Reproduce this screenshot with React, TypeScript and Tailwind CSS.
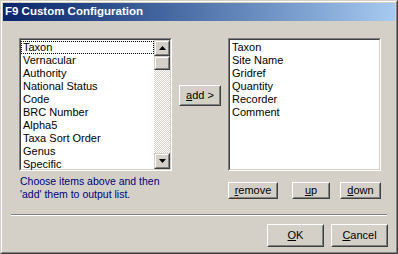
import React from "react";

const font = { fontFamily: '"Liberation Sans", Arial, sans-serif' };

function Btn({ w, h, children, className = "" }: { w: string; h: string; children: React.ReactNode; className?: string }) {
  return (
    <div className={`${w} ${h} ${className} border border-t-white border-l-white border-r-[#404040] border-b-[#404040] bg-[#d4d0c8]`}>
      <div className="w-full h-full border border-t-[#d4d0c8] border-l-[#d4d0c8] border-r-[#808080] border-b-[#808080] flex items-center justify-center text-[11px] text-black leading-none">
        {children}
      </div>
    </div>
  );
}

function ArrowBtn({ up }: { up?: boolean }) {
  return (
    <div className="w-[16px] h-[16px] shrink-0 border border-t-[#d4d0c8] border-l-[#d4d0c8] border-r-[#404040] border-b-[#404040] bg-[#d4d0c8]">
      <div className="w-full h-full border border-t-white border-l-white border-r-[#808080] border-b-[#808080] flex items-center justify-center">
        <svg width="7" height="4" viewBox="0 0 7 4">
          {up ? <polygon points="3.5,0 7,4 0,4" fill="#000" /> : <polygon points="0,0 7,0 3.5,4" fill="#000" />}
        </svg>
      </div>
    </div>
  );
}

function Sunken({ className, children }: { className: string; children: React.ReactNode }) {
  return (
    <div className={`${className} border border-t-[#808080] border-l-[#808080] border-r-white border-b-white`}>
      <div className="w-full h-full border border-t-[#404040] border-l-[#404040] border-r-[#d4d0c8] border-b-[#d4d0c8] bg-white flex">
        {children}
      </div>
    </div>
  );
}

const leftItems = ["Taxon", "Vernacular", "Authority", "National Status", "Code", "BRC Number", "Alpha5", "Taxa Sort Order", "Genus", "Specific"];
const rightItems = ["Taxon", "Site Name", "Gridref", "Quantity", "Recorder", "Comment"];

export default function App() {
  return (
    <div className="w-[398px] h-[254px] bg-[#d4d0c8] border border-t-[#d4d0c8] border-l-[#d4d0c8] border-r-[#404040] border-b-[#404040]" style={font}>
      <div className="w-full h-full border border-t-white border-l-white border-r-[#808080] border-b-[#808080] p-[1px] flex flex-col">
        <div className="h-[18px] shrink-0 bg-gradient-to-r from-[#0a246a] to-[#a6caf0] flex items-center pl-[2px]">
          <span className="text-white font-bold text-[11.5px] leading-none">F9 Custom Configuration</span>
        </div>
        <div className="pl-[16px] pt-[17px] flex">
          <div className="w-[153px] flex flex-col">
            <Sunken className="w-[153px] h-[133px]">
              <div className="flex-1 pt-[1px] text-[11px] leading-[13px] text-black">
                {leftItems.map((t, i) => (
                  <div key={t} className={`h-[13px] pl-[2px] ${i === 0 ? "outline outline-1 outline-dotted outline-black -outline-offset-1" : ""}`}>{t}</div>
                ))}
              </div>
              <div className="w-[16px] flex flex-col bg-[repeating-conic-gradient(#d4d0c8_0_25%,#ffffff_0_50%)] bg-[length:2px_2px]">
                <ArrowBtn up />
                <div className="w-[16px] h-[14px] border border-t-[#d4d0c8] border-l-[#d4d0c8] border-r-[#404040] border-b-[#404040] bg-[#d4d0c8]">
                  <div className="w-full h-full border border-t-white border-l-white border-r-[#808080] border-b-[#808080]" />
                </div>
                <div className="flex-1" />
                <ArrowBtn />
              </div>
            </Sunken>
            <div className="mt-[4px] text-[10.5px] leading-[13px] text-[#000080] pl-[1px]">
              Choose items above and then<br />'add' them to output list.
            </div>
          </div>
          <div className="ml-[7px] mt-[47px]">
            <Btn w="w-[42px]" h="h-[21px]"><span><u>a</u>dd &gt;</span></Btn>
          </div>
          <div className="ml-[7px] w-[153px] flex flex-col">
            <Sunken className="w-[153px] h-[133px]">
              <div className="flex-1 pt-[1px] text-[11px] leading-[13px] text-black">
                {rightItems.map((t) => (
                  <div key={t} className="h-[13px] pl-[2px]">{t}</div>
                ))}
              </div>
            </Sunken>
            <div className="mt-[11px] flex">
              <Btn w="w-[50px]" h="h-[17px]"><span><u>r</u>emove</span></Btn>
              <Btn w="w-[38px]" h="h-[17px]" className="ml-[14px]"><span><u>u</u>p</span></Btn>
              <Btn w="w-[41px]" h="h-[17px]" className="ml-[10px]"><span><u>d</u>own</span></Btn>
            </div>
          </div>
        </div>
        <div className="mt-[13px] ml-[8px] w-[376px] h-[2px] border-t border-t-[#808080] border-b border-b-white" />
        <div className="mt-[8px] flex justify-end pr-[7px] gap-[7px]">
          <Btn w="w-[57px]" h="h-[23px]"><span><u>O</u>K</span></Btn>
          <Btn w="w-[57px]" h="h-[23px]"><span><u>C</u>ancel</span></Btn>
        </div>
      </div>
    </div>
  );
}
